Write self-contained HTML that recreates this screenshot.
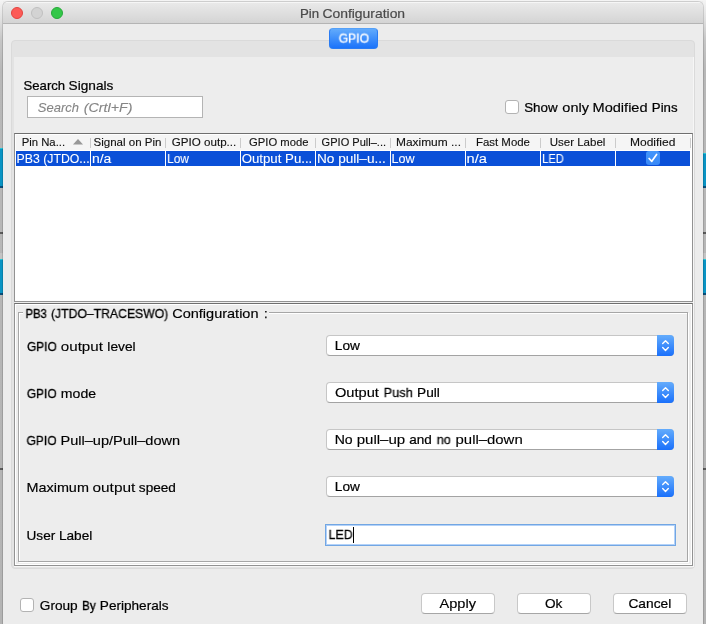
<!DOCTYPE html>
<html>
<head>
<meta charset="utf-8">
<title>Pin Configuration</title>
<style>
html,body{margin:0;padding:0;}
body{width:706px;height:624px;overflow:hidden;position:relative;background:#ececec;font-family:"Liberation Sans",sans-serif;font-size:13px;color:#000;}
.abs{position:absolute;}
.t{position:absolute;white-space:nowrap;line-height:16px;transform-origin:0 0;will-change:transform;-webkit-text-stroke:0.25px currentColor;}
/* background strips left/right */
.strip{position:absolute;top:0;width:3px;height:624px;background:linear-gradient(to bottom,#f4f4f4 0,#e0e0e0 20px,#c6c6c6 40px,#b8b8b8 70px,#b4b4b4 100%);}
.strip u{position:absolute;top:0;width:1px;height:624px;background:rgba(0,0,0,0.10);display:block;}
.strip i{position:absolute;left:0;width:3px;display:block;}
/* window */
#win{position:absolute;left:3px;top:2px;width:700px;height:622px;background:#ececec;border-radius:5px 5px 0 0;overflow:hidden;box-shadow:0 0 0 1px rgba(0,0,0,0.13);}
#titlebar{position:absolute;left:0;top:0;width:700px;height:21px;background:linear-gradient(#f6f6f6 0,#f6f6f6 1px,#e9e9e9 1px,#d4d4d4 100%);border-bottom:1px solid #b4b4b4;}
.tl{position:absolute;top:5px;width:12px;height:12px;border-radius:50%;box-sizing:border-box;}
/* tab pane */
#tabpane{position:absolute;left:11px;top:40px;width:684px;height:529px;background:#e3e3e3;border:1px solid #dadada;border-radius:4px;box-sizing:border-box;}
#tabinner{position:absolute;left:14px;top:57px;width:679px;height:509px;background:#ededed;border-right:1px solid #f6f6f6;border-bottom:1px solid #f6f6f6;}
#gpio{position:absolute;left:329px;top:28px;width:49px;height:21px;border-radius:4px;background:linear-gradient(#62abfc,#1b73fa);box-sizing:border-box;border:1px solid #2a7cf3;border-top-color:#55a0f7;}
/* table */
#tbl{position:absolute;left:14px;top:133px;width:679px;height:169px;background:#fff;border:1px solid #929292;border-top-color:#6f6f6f;box-sizing:border-box;}
.hsep{position:absolute;top:138px;width:1px;height:10px;background:#cbcbcb;}
.cell{position:absolute;top:151px;height:15px;background:#0b50d8;}
.h{font-size:11px;color:#111;-webkit-text-stroke:0.12px currentColor;}
.r{font-size:12px;color:#fff;-webkit-text-stroke:0.08px currentColor;}
/* config */
#cfg{position:absolute;left:14px;top:303px;width:679px;height:263px;border:1px solid #929292;border-top-color:#6f6f6f;box-sizing:border-box;background:#ededed;box-shadow:inset 0 0 0 1px #fff;}
#etch{position:absolute;left:18px;top:312px;width:670px;height:250px;border:1px solid #a6a6a6;box-sizing:border-box;box-shadow:1px 1px 0 #fff, inset 1px 1px 0 #fff;}
.combo{position:absolute;left:326px;width:348px;height:21px;box-sizing:border-box;border:1px solid #c6c6c6;border-bottom-color:#a3a3a3;border-radius:4px;background:#fff;}
.combo b{position:absolute;right:-1px;top:-1px;width:17px;height:21px;border-radius:0 4px 4px 0;background:linear-gradient(#64acfc,#1a70fb);display:block;}
.combo svg{position:absolute;left:0;top:0;}
.btn{position:absolute;top:593px;width:74px;height:21px;box-sizing:border-box;border:1px solid #c8c8c8;border-bottom-color:#a6a6a6;border-radius:4px;background:#fff;}
.cb{position:absolute;width:14px;height:14px;box-sizing:border-box;border:1px solid #b3b3b3;border-radius:3px;background:#fff;}
</style>
</head>
<body>
<!-- desktop strips behind the window -->
<div class="strip" style="left:0"><i style="top:148px;height:40px;background:#0a94c4"></i><i style="top:148px;height:1px;background:#27c6d6"></i><i style="top:186px;height:2px;background:#0a4e7a"></i><i style="top:232px;height:2px;background:#5a5a5a"></i><i style="top:253px;height:6px;background:#c4c4c4"></i><i style="top:259px;height:36px;background:#0a94c4"></i><i style="top:259px;height:1px;background:#27c6d6"></i><i style="top:293px;height:2px;background:#0a4e7a"></i><i style="top:468px;height:2px;background:#5a5a5a"></i></div>
<div class="strip" style="left:703px"><i style="top:153px;height:35px;background:#0a94c4"></i><i style="top:153px;height:1px;background:#27c6d6"></i><i style="top:186px;height:2px;background:#0a4e7a"></i><i style="top:232px;height:2px;background:#5a5a5a"></i><i style="top:253px;height:6px;background:#c4c4c4"></i><i style="top:259px;height:36px;background:#0a94c4"></i><i style="top:259px;height:1px;background:#27c6d6"></i><i style="top:293px;height:2px;background:#0a4e7a"></i><i style="top:468px;height:2px;background:#5a5a5a"></i></div>
<div class="abs" style="left:0;top:0;width:706px;height:1px;background:#f4f4f4"></div>

<div id="win">
  <div id="titlebar">
    <div class="tl" style="left:8px;background:#fc5b57;border:1px solid #e2443f"></div>
    <div class="tl" style="left:28px;background:#d3d3d3;border:1px solid #bfbfbf"></div>
    <div class="tl" style="left:48px;background:#33c748;border:1px solid #27a93a"></div>
  </div>
</div>
<div class="t" id="titlea" style="-webkit-text-stroke:0.24px;left:299px;top:5px;font-size:13px;color:#4a4a4a;transform:translate(0.99px,0.50px) scaleX(1.018);">Pin</div>
<div class="t" id="titleb" style="-webkit-text-stroke:0.19px;left:322px;top:5px;font-size:13px;color:#4a4a4a;transform:translate(0.42px,0.50px) scaleX(1.069);">Configuration</div>

<div id="tabpane"></div>
<div id="tabinner"></div>
<div id="gpio"></div>
<div class="t" id="gpiot" style="-webkit-text-stroke:0.31px;left:338px;top:30px;color:#fff;font-size:13px;transform:translate(0.71px,0.60px) scaleX(0.931);">GPIO</div>

<div class="t" id="ssa" style="-webkit-text-stroke:0.24px;left:23px;top:78px;transform:translate(0.57px,0.00px) scaleX(1.008);">Search</div>
<div class="t" id="ssb" style="-webkit-text-stroke:0.21px;left:68px;top:78px;transform:translate(0.61px,0.00px) scaleX(1.050);">Signals</div>
<div class="abs" style="left:27px;top:96px;width:176px;height:22px;box-sizing:border-box;border:1px solid #b4b4b4;background:#fff;"></div>
<div class="t" id="pha" style="-webkit-text-stroke:0.12px;left:37px;top:99px;font-style:italic;color:#858585;transform:translate(0.83px,0.50px) scaleX(1.000);">Search</div>
<div class="t" id="phb" style="-webkit-text-stroke:0.12px;left:83px;top:99px;font-style:italic;color:#858585;transform:translate(0.78px,0.50px) scaleX(1.094);">(Crtl+F)</div>

<div class="cb" style="left:505px;top:100px;"></div>
<div class="t" id="sompa" style="-webkit-text-stroke:0.23px;left:524px;top:100px;transform:translate(0.18px,0.00px) scaleX(1.028);">Show</div>
<div class="t" id="sompb" style="-webkit-text-stroke:0.16px;left:562px;top:100px;transform:translate(0.35px,0.00px) scaleX(1.115);">only</div>
<div class="t" id="sompc" style="-webkit-text-stroke:0.15px;left:592px;top:100px;transform:translate(0.50px,0.00px) scaleX(1.121);">Modified</div>
<div class="t" id="sompd" style="-webkit-text-stroke:0.24px;left:651px;top:100px;transform:translate(0.84px,0.00px) scaleX(1.018);">Pins</div>

<!-- table -->
<div id="tbl"></div>
<div class="abs" style="left:16px;top:135px;width:675px;height:15px;background:#f5f5f5"></div>
<div class="hsep" style="left:90px"></div><div class="hsep" style="left:165px"></div><div class="hsep" style="left:240px"></div><div class="hsep" style="left:315px"></div><div class="hsep" style="left:390px"></div><div class="hsep" style="left:465px"></div><div class="hsep" style="left:540px"></div><div class="hsep" style="left:615px"></div><div class="hsep" style="left:690px"></div>
<div class="t h" id="h1" style="left:21px;top:134px;transform:translate(0.63px,0.00px) scaleX(1.030);">Pin Na...</div>
<svg class="abs" style="left:72px;top:138px" width="12" height="7"><path d="M1 6.5 L6 1 L11 6.5 Z" fill="#989898"/></svg>
<div class="t h" id="h2" style="left:93px;top:134px;transform:translate(0.45px,0.00px) scaleX(1.049);">Signal on Pin</div>
<div class="t h" id="h3" style="left:171px;top:134px;transform:translate(0.81px,0.00px) scaleX(1.054);">GPIO outp...</div>
<div class="t h" id="h4" style="left:249px;top:134px;transform:translate(0.06px,0.00px) scaleX(1.022);">GPIO mode</div>
<div class="t h" id="h5" style="left:321px;top:134px;transform:translate(0.62px,0.00px) scaleX(1.004);">GPIO Pull–...</div>
<div class="t h" id="h6" style="left:395px;top:134px;transform:translate(0.96px,0.00px) scaleX(1.085);">Maximum ...</div>
<div class="t h" id="h7" style="left:475px;top:134px;transform:translate(0.94px,0.00px) scaleX(1.040);">Fast Mode</div>
<div class="t h" id="h8" style="left:549px;top:134px;transform:translate(0.63px,0.00px) scaleX(1.048);">User Label</div>
<div class="t h" id="h9" style="left:630px;top:134px;transform:translate(0.01px,0.00px) scaleX(1.091);">Modified</div>

<div class="cell" style="left:16px;width:74px"></div>
<div class="cell" style="left:91px;width:74px"></div>
<div class="cell" style="left:166px;width:74px"></div>
<div class="cell" style="left:241px;width:74px"></div>
<div class="cell" style="left:316px;width:74px"></div>
<div class="cell" style="left:391px;width:74px"></div>
<div class="cell" style="left:466px;width:74px"></div>
<div class="cell" style="left:541px;width:74px"></div>
<div class="cell" style="left:616px;width:74px"></div>
<div class="t r" id="r1" style="left:16px;top:151px;transform:translate(0.56px,0.00px) scaleX(1.023);">PB3 (JTDO...</div>
<div class="t r" id="r2" style="left:91px;top:151px;transform:translate(0.94px,0.00px) scaleX(1.161);">n/a</div>
<div class="t r" id="r3" style="left:167px;top:151px;transform:translate(0.08px,0.00px) scaleX(0.996);">Low</div>
<div class="t r" id="r4" style="left:241px;top:151px;transform:translate(0.65px,0.00px) scaleX(1.103);">Output Pu...</div>
<div class="t r" id="r5" style="left:316px;top:151px;transform:translate(0.93px,0.00px) scaleX(1.136);">No pull–u...</div>
<div class="t r" id="r6" style="left:391px;top:151px;transform:translate(0.52px,0.00px) scaleX(1.049);">Low</div>
<div class="t r" id="r7" style="left:466px;top:151px;transform:translate(0.54px,0.00px) scaleX(1.222);">n/a</div>
<div class="t r" id="r8" style="left:542px;top:151px;transform:translate(0.17px,0.00px) scaleX(0.924);">LED</div>
<div class="abs" style="left:646px;top:151px;width:14px;height:14px;border-radius:3px;background:linear-gradient(#4396fb,#3888f7);"></div>
<svg class="abs" style="left:646px;top:151px" width="14" height="14"><path d="M3.1 7.5 L5.8 10.3 L10.6 3.5" fill="none" stroke="#fff" stroke-width="1.7" stroke-linecap="round" stroke-linejoin="round"/></svg>

<!-- config -->
<div id="cfg"></div>
<div id="etch"></div>
<div class="abs" style="left:23px;top:310px;width:246px;height:6px;background:#ededed"></div>
<div class="t" id="cta" style="-webkit-text-stroke:0.35px;left:25px;top:306px;transform:translate(0.51px,0.00px) scaleX(0.869);">PB3</div>
<div class="t" id="ctb" style="-webkit-text-stroke:0.30px;left:50px;top:306px;transform:translate(0.97px,0.00px) scaleX(0.939);">(JTDO–TRACESWO)</div>
<div class="t" id="ctc" style="-webkit-text-stroke:0.16px;left:172px;top:306px;transform:translate(0.20px,0.00px) scaleX(1.116);">Configuration</div>
<div class="t" id="ctd" style="-webkit-text-stroke:0.25px;left:263px;top:306px;transform:translate(0.90px,0.00px) scaleX(1.000);">:</div>

<div class="t" id="l1a" style="-webkit-text-stroke:0.32px;left:27px;top:339px;transform:translate(0.04px,0.00px) scaleX(0.912);">GPIO</div>
<div class="t" id="l1b" style="-webkit-text-stroke:0.12px;left:60px;top:339px;transform:translate(0.80px,0.00px) scaleX(1.164);">output</div>
<div class="t" id="l1c" style="-webkit-text-stroke:0.20px;left:107px;top:339px;transform:translate(0.32px,0.00px) scaleX(1.058);">level</div>
<div class="t" id="l2a" style="-webkit-text-stroke:0.32px;left:26px;top:386px;transform:translate(0.87px,0.00px) scaleX(0.914);">GPIO</div>
<div class="t" id="l2b" style="-webkit-text-stroke:0.18px;left:60px;top:386px;transform:translate(0.84px,0.00px) scaleX(1.083);">mode</div>
<div class="t" id="l3a" style="-webkit-text-stroke:0.31px;left:26px;top:433px;transform:translate(0.51px,0.00px) scaleX(0.924);">GPIO</div>
<div class="t" id="l3b" style="-webkit-text-stroke:0.15px;left:60px;top:433px;transform:translate(0.45px,0.00px) scaleX(1.119);">Pull–up/Pull–down</div>
<div class="t" id="l4a" style="-webkit-text-stroke:0.16px;left:26px;top:480px;transform:translate(0.50px,0.00px) scaleX(1.107);">Maximum</div>
<div class="t" id="l4b" style="-webkit-text-stroke:0.10px;left:92px;top:480px;transform:translate(0.50px,0.00px) scaleX(1.184);">output</div>
<div class="t" id="l4c" style="-webkit-text-stroke:0.21px;left:138px;top:480px;transform:translate(0.86px,0.00px) scaleX(1.045);">speed</div>
<div class="t" id="l5a" style="-webkit-text-stroke:0.21px;left:26px;top:528px;transform:translate(0.53px,0.00px) scaleX(1.046);">User</div>
<div class="t" id="l5b" style="-webkit-text-stroke:0.21px;left:58px;top:528px;transform:translate(0.91px,0.00px) scaleX(1.048);">Label</div>

<div class="combo" style="top:335px"><b></b></div>
<div class="combo" style="top:382px"><b></b></div>
<div class="combo" style="top:429px"><b></b></div>
<div class="combo" style="top:476px"><b></b></div>
<svg class="abs" style="left:657px;top:335px" width="17" height="21"><path d="M5.7 8.5 L8.5 5.7 L11.3 8.5 M5.7 12.6 L8.5 15.4 L11.3 12.6" fill="none" stroke="#fff" stroke-width="1.4" stroke-linecap="round" stroke-linejoin="round"/></svg>
<svg class="abs" style="left:657px;top:382px" width="17" height="21"><path d="M5.7 8.5 L8.5 5.7 L11.3 8.5 M5.7 12.6 L8.5 15.4 L11.3 12.6" fill="none" stroke="#fff" stroke-width="1.4" stroke-linecap="round" stroke-linejoin="round"/></svg>
<svg class="abs" style="left:657px;top:429px" width="17" height="21"><path d="M5.7 8.5 L8.5 5.7 L11.3 8.5 M5.7 12.6 L8.5 15.4 L11.3 12.6" fill="none" stroke="#fff" stroke-width="1.4" stroke-linecap="round" stroke-linejoin="round"/></svg>
<svg class="abs" style="left:657px;top:476px" width="17" height="21"><path d="M5.7 8.5 L8.5 5.7 L11.3 8.5 M5.7 12.6 L8.5 15.4 L11.3 12.6" fill="none" stroke="#fff" stroke-width="1.4" stroke-linecap="round" stroke-linejoin="round"/></svg>
<div class="t" id="c1" style="-webkit-text-stroke:0.21px;left:334px;top:338px;transform:translate(0.84px,0.00px) scaleX(1.052);">Low</div>
<div class="t" id="c2a" style="-webkit-text-stroke:0.15px;left:334px;top:385px;transform:translate(0.94px,0.00px) scaleX(1.125);">Output</div>
<div class="t" id="c2b" style="-webkit-text-stroke:0.26px;left:383px;top:385px;transform:translate(0.58px,0.00px) scaleX(0.985);">Push</div>
<div class="t" id="c2c" style="-webkit-text-stroke:0.21px;left:417px;top:385px;transform:translate(0.10px,0.00px) scaleX(1.050);">Pull</div>
<div class="t" id="c3a" style="-webkit-text-stroke:0.19px;left:334px;top:432px;transform:translate(0.64px,0.00px) scaleX(1.081);">No</div>
<div class="t" id="c3b" style="-webkit-text-stroke:0.13px;left:356px;top:432px;transform:translate(0.73px,0.00px) scaleX(1.156);">pull–up</div>
<div class="t" id="c3c" style="-webkit-text-stroke:0.22px;left:409px;top:432px;transform:translate(0.22px,0.00px) scaleX(1.039);">and</div>
<div class="t" id="c3d" style="-webkit-text-stroke:0.27px;left:436px;top:432px;transform:translate(0.72px,0.00px) scaleX(0.971);">no</div>
<div class="t" id="c3e" style="-webkit-text-stroke:0.13px;left:455px;top:432px;transform:translate(0.57px,0.00px) scaleX(1.146);">pull–down</div>
<div class="t" id="c4" style="-webkit-text-stroke:0.21px;left:334px;top:479px;transform:translate(0.84px,0.00px) scaleX(1.052);">Low</div>

<div class="abs" style="left:325px;top:524px;width:351px;height:22px;box-sizing:border-box;border:1px solid #72a6e3;background:#fff;box-shadow:inset 0 0 0 1px #b3d2f9,0 0 0 1px #f0eeea;"></div>
<div class="t" id="ul" style="-webkit-text-stroke:0.29px;left:328px;top:527px;transform:translate(0.52px,0.00px) scaleX(0.952);">LED</div>
<div class="abs" style="left:353px;top:527px;width:1px;height:16px;background:#000"></div>

<!-- bottom -->
<div class="cb" style="left:20px;top:598px;"></div>
<div class="t" id="gbpa" style="-webkit-text-stroke:0.21px;left:39px;top:598px;transform:translate(0.77px,0.00px) scaleX(1.050);">Group</div>
<div class="t" id="gbpb" style="-webkit-text-stroke:0.34px;left:82px;top:598px;transform:translate(0.11px,0.00px) scaleX(0.889);">By</div>
<div class="t" id="gbpc" style="-webkit-text-stroke:0.21px;left:99px;top:598px;transform:translate(0.83px,0.00px) scaleX(1.045);">Peripherals</div>
<div class="btn" style="left:421px"></div>
<div class="btn" style="left:517px"></div>
<div class="btn" style="left:613px"></div>
<div class="t" id="b1" style="-webkit-text-stroke:0.15px;left:439px;top:595px;transform:translate(0.53px,0.60px) scaleX(1.122);">Apply</div>
<div class="t" id="b2" style="-webkit-text-stroke:0.21px;left:544px;top:595px;transform:translate(0.94px,0.60px) scaleX(1.046);">Ok</div>
<div class="t" id="b3" style="-webkit-text-stroke:0.20px;left:628px;top:595px;transform:translate(0.38px,0.60px) scaleX(1.059);">Cancel</div>
</body>
</html>
